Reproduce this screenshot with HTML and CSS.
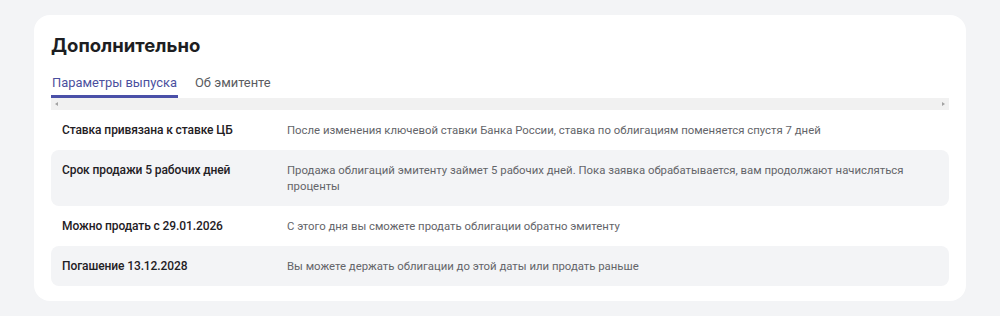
FILE: index.html
```html
<!DOCTYPE html>
<html lang="ru">
<head>
<meta charset="utf-8">
<link rel="stylesheet" href="styles.css">
</head>
<body>
<section class="card">
  <h2 class="title">Дополнительно</h2>
  <div class="tabs">
    <div class="tab active">Параметры выпуска</div>
    <div class="tab">Об эмитенте</div>
  </div>
  <div class="scrollbar">
    <span class="arrow left"></span>
    <span class="arrow right"></span>
  </div>
  <div class="rows">
    <div class="row">
      <div class="label">Ставка привязана к ставке ЦБ</div>
      <div class="desc">После изменения ключевой ставки Банка России, ставка по облигациям поменяется спустя 7 дней</div>
    </div>
    <div class="row alt">
      <div class="label">Срок продажи 5 рабочих дней</div>
      <div class="desc">Продажа облигаций эмитенту займет 5 рабочих дней. Пока заявка обрабатывается, вам продолжают начисляться проценты</div>
    </div>
    <div class="row">
      <div class="label">Можно продать с 29.01.2026</div>
      <div class="desc">С этого дня вы сможете продать облигации обратно эмитенту</div>
    </div>
    <div class="row alt">
      <div class="label">Погашение 13.12.2028</div>
      <div class="desc">Вы можете держать облигации до этой даты или продать раньше</div>
    </div>
  </div>
</section>
</body>
</html>
```

FILE: styles.css
```css
html, body {
  margin: 0;
  padding: 0;
  background: #f3f4f6;
}
body {
  padding: 15px 34px 16px 34px;
  font-family: Roboto, "Liberation Sans", sans-serif;
  color: #1f2024;
}
.card {
  background: #ffffff;
  border-radius: 16px;
  padding: 17px 17px 15px 17px;
}
.title {
  margin: 0;
  font-family: Inter, "Noto Sans", sans-serif;
  font-size: 18.5px;
  font-weight: 700;
  line-height: 26px;
  color: #1d1e22;
}
.tabs {
  display: flex;
  gap: 16px;
  margin-top: 15px;
}
.tab {
  font-size: 12.9px;
  line-height: 19px;
  padding: 0 1px 3px 1px;
  color: #5a5b60;
  border-bottom: 3px solid transparent;
}
.tab.active {
  color: #4a4f9e;
  border-bottom-color: #4a50a8;
}
.scrollbar {
  height: 12px;
  background: #f1f1f1;
  display: flex;
  justify-content: space-between;
  align-items: center;
  padding: 0 4px;
}
.arrow {
  width: 0;
  height: 0;
  border-top: 2px solid transparent;
  border-bottom: 2px solid transparent;
}
.arrow.left { border-right: 3px solid #a3a3a3; }
.arrow.right { border-left: 3px solid #a3a3a3; }
.rows {
  display: flex;
  flex-direction: column;
}
.row {
  display: grid;
  grid-template-columns: 225px 1fr;
  padding: 12px 11px;
  border-radius: 8px;
  font-size: 11.35px;
  line-height: 16px;
}
.row.alt {
  background: #f3f4f6;
}
.label {
  font-size: 12px;
  font-weight: 500;
  letter-spacing: -0.1px;
  color: #1f2024;
}
.desc {
  color: #636469;
}
```
